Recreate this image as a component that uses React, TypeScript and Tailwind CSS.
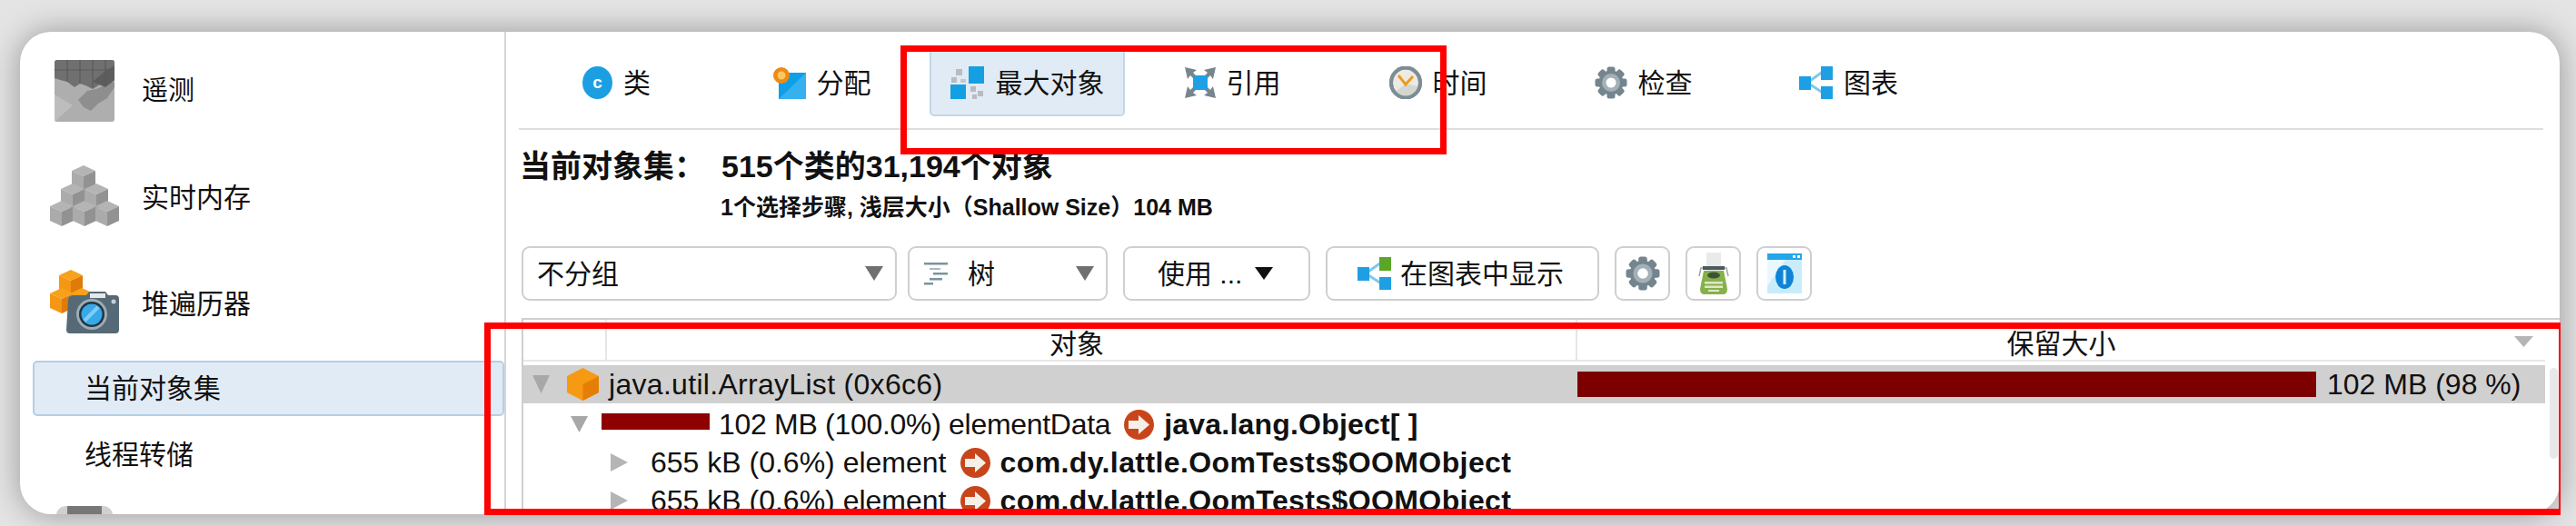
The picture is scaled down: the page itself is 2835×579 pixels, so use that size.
import React from "react";

const Tri = ({ dir, className }: { dir: "down" | "right"; className: string }) => (
  <svg viewBox="0 0 20 20" preserveAspectRatio="none" className={className}>
    <polygon points={dir === "down" ? "0,0 20,0 10,20" : "0,0 20,10 0,20"} fill="currentColor" />
  </svg>
);

const ClassIcon = () => (
  <svg viewBox="0 0 33 36" className="w-[33px] h-[36px]">
    <ellipse cx="16.5" cy="18" rx="16.5" ry="18" fill="#1b9fe2" />
    <text x="16.5" y="24" textAnchor="middle" fontSize="19" fontWeight="700" fill="#fff" fontFamily="Liberation Sans">c</text>
  </svg>
);

const AllocIcon = () => (
  <svg viewBox="0 0 36 36" className="w-[36px] h-[36px]">
    <rect x="6" y="7" width="30" height="29" fill="#0f9fe6" />
    <polygon points="36,7 36,36 6,36" fill="#34b1ee" />
    <circle cx="9" cy="10" r="9" fill="#ef8a12" />
    <circle cx="9" cy="10" r="4.5" fill="#f9c860" />
  </svg>
);

const BiggestIcon = () => (
  <svg viewBox="0 0 38 36" className="w-[38px] h-[36px]">
    <rect x="20" y="0" width="17" height="19" fill="#159fe3" />
    <rect x="0" y="20" width="17" height="16" fill="#159fe3" />
    <rect x="6" y="3" width="7" height="7" fill="#b8bcc0" />
    <rect x="1" y="12" width="6" height="6" fill="#b8bcc0" />
    <rect x="11" y="14" width="6" height="4" fill="#c4c8cc" />
    <rect x="22" y="22" width="6" height="6" fill="#b8bcc0" />
    <rect x="30" y="27" width="6" height="6" fill="#b8bcc0" />
    <rect x="24" y="31" width="5" height="5" fill="#b8bcc0" />
  </svg>
);

const RefIcon = () => (
  <svg viewBox="0 0 34 34" className="w-[34px] h-[34px]">
    <g fill="#76868e">
      <polygon points="0,0 13,3 9,6 15,12 12,15 6,9 3,13" />
      <polygon points="34,0 21,3 25,6 19,12 22,15 28,9 31,13" />
      <polygon points="0,34 13,31 9,28 15,22 12,19 6,25 3,21" />
      <polygon points="34,34 21,31 25,28 19,22 22,19 28,25 31,21" />
    </g>
    <rect x="9" y="9" width="16" height="16" fill="#1f9fe6" />
  </svg>
);

const ClockIcon = () => (
  <svg viewBox="0 0 36 36" className="w-[36px] h-[36px]">
    <ellipse cx="18" cy="18" rx="16" ry="16.5" fill="#ecebe3" stroke="#7c8d96" strokeWidth="4" />
    <path d="M4 30 L18 19 L32 22 L28 32 L12 34 Z" fill="#d4d6d2" />
    <ellipse cx="18" cy="18" rx="16" ry="16.5" fill="none" stroke="#7c8d96" strokeWidth="4" />
    <path d="M10 10 L18 20 L26 11" fill="none" stroke="#ef9a1e" strokeWidth="3" />
  </svg>
);

const GearIcon = ({ size }: { size: string }) => (
  <svg viewBox="0 0 36 36" className={size}>
    <g fill="#75858e">
      {[0, 45, 90, 135, 180, 225, 270, 315].map((a) => (
        <rect key={a} x="13.5" y="0.5" width="9" height="9" rx="2.5" transform={`rotate(${a} 18 18)`} />
      ))}
      <circle cx="18" cy="18" r="13.5" />
    </g>
    <circle cx="18" cy="18" r="10" fill="#a3b0b7" />
    <circle cx="18" cy="18" r="5.5" fill="#fff" />
  </svg>
);

const GraphIcon = ({ top }: { top: string }) => (
  <svg viewBox="0 0 37 36" className="w-[37px] h-[36px]">
    <path d="M9 18 L26 6 M9 18 L26 29" stroke="#7ec8ef" strokeWidth="3" />
    <rect x="0" y="11" width="13" height="15" fill="#1f9fe3" />
    <rect x="24" y="0" width="13" height="15" fill={top} />
    <rect x="24" y="22" width="13" height="14" fill="#1f9fe3" />
  </svg>
);

const TreeIcon = () => (
  <svg viewBox="0 0 26 26" className="w-[26px] h-[26px]">
    <g fill="#7b939f">
      <rect x="0" y="1" width="26" height="2.5" />
      <rect x="6" y="7" width="12" height="2" fill="#a9bac3" />
      <rect x="10" y="12" width="16" height="2.5" />
      <rect x="6" y="18" width="14" height="2.5" />
      <rect x="0" y="23" width="10" height="2.5" />
    </g>
  </svg>
);

const TypewriterIcon = () => (
  <svg viewBox="0 0 34 46" className="w-[34px] h-[46px]">
    <rect x="9" y="0" width="16" height="20" fill="#e9ebea" />
    <path d="M1 26 L3 17 H31 L33 26" fill="none" stroke="#9aa6aa" strokeWidth="1.5" />
    <rect x="5" y="15" width="24" height="4" fill="#4b5a60" />
    <path d="M6 20 H28 L32 40 Q32 46 27 46 H7 Q2 46 2 40 Z" fill="#86b14a" />
    <ellipse cx="17" cy="25" rx="7" ry="3.5" fill="#3f5238" />
    <g fill="#dfe8c8">
      <rect x="7" y="32" width="20" height="2.5" />
      <rect x="7" y="36.5" width="20" height="2.5" />
      <rect x="11" y="41" width="12" height="2" />
    </g>
  </svg>
);

const InfoIcon = () => (
  <svg viewBox="0 0 38 44" className="w-[38px] h-[44px]">
    <rect x="0" y="7" width="38" height="37" fill="#c9ecfb" />
    <polygon points="0,7 20,7 0,36" fill="#e8f8fe" />
    <rect x="0" y="0" width="38" height="7" fill="#25a6e8" />
    <rect x="28" y="2" width="3" height="3" fill="#fff" />
    <rect x="33" y="2" width="3" height="3" fill="#fff" />
    <ellipse cx="19" cy="26" rx="10" ry="13" fill="#0f84d6" />
    <rect x="17.5" y="18" width="3" height="16" fill="#d9f1fc" />
  </svg>
);

const Hexagon = () => (
  <svg viewBox="0 0 35 36" className="w-[35px] h-[36px]">
    <polygon points="17.5,0 35,9 35,27 17.5,36 0,27 0,9" fill="#f59a12" />
    <polygon points="17.5,18 35,9 35,27 17.5,36" fill="#e57e06" />
  </svg>
);

const ArrowIcon = () => (
  <svg viewBox="0 0 33 33" className="w-[33px] h-[33px] shrink-0">
    <circle cx="16.5" cy="16.5" r="16.5" fill="#c8451b" />
    <polygon points="5,12 16,12 16,6 28,16.5 16,27 16,21 5,21" fill="#f4efe9" />
  </svg>
);

const TelemetryIcon = () => (
  <svg viewBox="0 0 66 68" className="w-[66px] h-[68px]">
    <rect width="66" height="68" rx="3" fill="#aeaeae" />
    <path d="M0 3 Q0 0 3 0 H63 Q66 0 66 3 V22 L58 30 L50 27 L42 32 L34 28 L28 26 L22 30 L14 24 L6 22 L0 20 Z" fill="#707070" />
    <path d="M26 44 L36 34 L46 32 L60 26 L66 24 V30 L58 42 L48 48 L40 56 L32 52 Z" fill="#8e8e8e" />
    <path d="M0 68 L20 50 L0 38 Z" fill="#bdbdbd" />
    <path d="M42 24 L56 12 L66 6 V22 L56 30 Z" fill="#5d5d5d" />
    <path d="M0 11 H66 M14 0 V24 M28 0 V26 M42 0 V30 M56 0 V28" stroke="#5a5a5a" strokeWidth="1.2" />
  </svg>
);

const Cube = ({ x, y, light, mid, dark }: { x: number; y: number; light: string; mid: string; dark: string }) => (
  <g transform={`translate(${x} ${y})`}>
    <polygon points="13,0 26,6 13,12 0,6" fill={light} />
    <polygon points="0,6 13,12 13,28 0,22" fill={mid} />
    <polygon points="13,12 26,6 26,22 13,28" fill={dark} />
  </g>
);

const CubesIcon = () => {
  const c = { light: "#b4b4b4", mid: "#ababab", dark: "#929292" };
  return (
    <svg viewBox="0 0 76 67" className="w-[76px] h-[67px]">
      <Cube x={24} y={0} {...c} />
      <Cube x={12} y={20} {...c} />
      <Cube x={38} y={20} {...c} />
      <Cube x={0} y={39} {...c} />
      <Cube x={25} y={39} {...c} />
      <Cube x={50} y={39} {...c} />
    </svg>
  );
};

const HeapWalkerIcon = () => {
  const c = { light: "#f7a11c", mid: "#f59614", dark: "#e07a08" };
  return (
    <svg viewBox="0 0 76 70" className="w-[76px] h-[70px]">
      <Cube x={10} y={0} {...c} />
      <Cube x={0} y={20} {...c} />
      <Cube x={22} y={20} {...c} />
      <path d="M20 34 Q20 28 26 28 H40 L43 24 H61 L64 28 H72 Q76 28 76 32 V66 Q76 70 72 70 H22 Q18 70 18 66 Z" fill="#556a76" />
      <rect x="44" y="26" width="17" height="5" fill="#e6e9ea" />
      <circle cx="46" cy="49" r="17" fill="#9eadb5" />
      <circle cx="46" cy="49" r="14" fill="#24343e" />
      <circle cx="46" cy="49" r="11.5" fill="#35a9ea" />
      <path d="M38 56 L53 41" stroke="#7fcdf4" strokeWidth="4" />
      <circle cx="70" cy="35" r="2.5" fill="#c5d0d5" />
    </svg>
  );
};

const tabs = [
  { label: "类", icon: <ClassIcon /> },
  { label: "分配", icon: <AllocIcon /> },
  { label: "最大对象", icon: <BiggestIcon />, active: true },
  { label: "引用", icon: <RefIcon /> },
  { label: "时间", icon: <ClockIcon /> },
  { label: "检查", icon: <GearIcon size="w-[36px] h-[36px]" /> },
  { label: "图表", icon: <GraphIcon top="#1f9fe3" /> },
];

const btn = "flex items-center h-[60px] bg-white border-2 border-[#cfcfcf] rounded-[9px]";

const ChildRow = () => (
  <div className="flex items-center h-[42px] pl-[96px] text-[32px] whitespace-nowrap">
    <Tri dir="right" className="w-[19px] h-[20px] text-[#b5b5b5] mr-[25px] shrink-0" />
    <span>655 kB (0.6%) element</span>
    <span className="ml-[15px]"><ArrowIcon /></span>
    <span className="ml-[11px] font-bold tracking-[0.4px]">com.dy.lattle.OomTests$OOMObject</span>
  </div>
);

export default function App() {
  return (
    <div className="relative w-[2835px] h-[579px] overflow-hidden bg-[#e4e4e4] pt-[35px] pl-[22px] text-[#111] font-['Liberation_Sans','Noto_Sans_CJK_SC',sans-serif]">
      <div className="flex w-[2795px] h-[531px] bg-white rounded-[34px] overflow-hidden shadow-[0_0_34px_rgba(0,0,0,0.34)]">
        {/* left nav */}
        <aside className="w-[535px] shrink-0 border-r-2 border-[#d6d6d6] overflow-hidden">
          <div className="flex items-center h-[68px] mt-[31px] pl-[38px] gap-[30px] text-[29px]">
            <TelemetryIcon />
            <span className="mt-[2px]">遥测</span>
          </div>
          <div className="flex items-center h-[67px] mt-[48px] pl-[33px] gap-[25px] text-[30px]">
            <CubesIcon />
            <span className="mt-[3px]">实时内存</span>
          </div>
          <div className="flex items-center h-[70px] mt-[48px] pl-[33px] gap-[25px] text-[30px]">
            <HeapWalkerIcon />
            <span className="mt-[4px]">堆遍历器</span>
          </div>
          <div className="flex items-center h-[61px] mt-[30px] ml-[14px] pl-[55px] bg-[#e1ebf5] border-2 border-[#b5cfe5] rounded-[5px] text-[30px]">
            当前对象集
          </div>
          <div className="flex items-center h-[40px] mt-[22px] pl-[71px] text-[30px]">线程转储</div>
          <div className="relative mt-[37px] ml-[40px] w-[62px] h-[14px] bg-[#d0d0d0] rounded-t-[10px]">
            <div className="absolute left-[12px] top-0 w-[38px] h-[14px] bg-[#777]" />
          </div>
        </aside>

        <main className="flex-1 min-w-0 pl-[14px]">
          {/* tabs */}
          <div className="flex gap-[11px] h-[108px] pt-[19px] mr-[18px] border-b-2 border-[#dedede]">
            {tabs.map((t) => (
              <div
                key={t.label}
                className={`flex items-center justify-center gap-[12px] w-[215px] h-[74px] rounded-[5px] text-[30px] ${
                  t.active ? "bg-[#e1ebf5] border-2 border-[#c3d6e6]" : ""
                }`}
              >
                {t.icon}
                <span>{t.label}</span>
              </div>
            ))}
          </div>

          {/* current object set */}
          <div className="pl-[1px] h-[128px]">
            <div className="flex items-center pt-[20px] h-[60px] font-bold text-[34px]">
              <span className="w-[222px]">当前对象集：</span>
              <span>515个类的31,194个对象</span>
            </div>
            <div className="pl-[221px] pt-[7px] font-bold text-[25px]">1个选择步骤, 浅层大小（Shallow Size）104 MB</div>
          </div>

          {/* toolbar */}
          <div className="flex pl-[3px] text-[30px]">
            <div className={`${btn} w-[413px] justify-between pl-[15px] pr-[13px]`}>
              <span>不分组</span>
              <Tri dir="down" className="w-[20px] h-[16px] text-[#707070]" />
            </div>
            <div className={`${btn} w-[220px] ml-[12px] pl-[16px] pr-[13px]`}>
              <TreeIcon />
              <span className="ml-[22px]">树</span>
              <Tri dir="down" className="ml-auto w-[20px] h-[16px] text-[#707070]" />
            </div>
            <div className={`${btn} w-[206px] ml-[17px] pl-[36px]`}>
              <span>使用 ...</span>
              <Tri dir="down" className="ml-[14px] w-[20px] h-[14px] text-[#111]" />
            </div>
            <div className={`${btn} w-[301px] ml-[17px] pl-[33px] gap-[10px]`}>
              <GraphIcon top="#5aa626" />
              <span>在图表中显示</span>
            </div>
            <div className={`${btn} w-[61px] ml-[17px] justify-center`}>
              <GearIcon size="w-[38px] h-[40px]" />
            </div>
            <div className={`${btn} w-[61px] ml-[17px] justify-center`}>
              <TypewriterIcon />
            </div>
            <div className={`${btn} w-[61px] ml-[17px] justify-center`}>
              <InfoIcon />
            </div>
          </div>

          {/* table */}
          <div className="flex ml-[3px] mt-[19px] h-[220px] border-t-2 border-l-2 border-[#cfcfcf]">
            <div className="w-[2225px] shrink-0">
              <div className="flex h-[46px] text-[30px] border-b-2 border-[#e8e8e8]">
                <div className="w-[92px] border-r-2 border-[#e6e6e6]" />
                <div className="w-[1068px] border-r-2 border-[#e6e6e6] flex items-center justify-center pr-[32px] pt-[8px]">对象</div>
                <div className="relative flex-1 flex items-center justify-center pt-[8px]">
                  保留大小
                  <Tri dir="down" className="absolute right-[13px] top-[18px] w-[21px] h-[12px] text-[#b5b5b5]" />
                </div>
              </div>
              <div className="flex items-center h-[42px] mt-[4px] bg-[#d0d0d0] text-[32px] whitespace-nowrap">
                <div className="flex items-center w-[1160px] shrink-0 pl-[10px] tracking-[0.3px]">
                  <Tri dir="down" className="w-[19px] h-[20px] text-[#a8a8a8]" />
                  <span className="ml-[19px]"><Hexagon /></span>
                  <span className="ml-[11px]">java.util.ArrayList (0x6c6)</span>
                </div>
                <div className="w-[813px] h-[28px] bg-[#7c0000]" />
                <span className="ml-[12px]">102 MB (98 %)</span>
              </div>
              <div className="flex items-center h-[42px] mt-[2px] pl-[52px] text-[32px] whitespace-nowrap">
                <Tri dir="down" className="w-[19px] h-[18px] text-[#a8a8a8] mr-[15px] shrink-0" />
                <div className="w-[119px] h-[18px] bg-[#8f0000] -mt-[6px]" />
                <span className="ml-[10px] tracking-[-0.3px]">102 MB (100.0%) elementData</span>
                <span className="ml-[15px]"><ArrowIcon /></span>
                <span className="ml-[11px] font-bold tracking-[0.2px]">java.lang.Object[ ]</span>
              </div>
              <ChildRow />
              <ChildRow />
            </div>
            <div className="w-[9px] h-[100px] mt-[53px] ml-[5px] bg-[#e8e8e8] rounded-[5px]" />
          </div>
        </main>
      </div>

      {/* red annotation boxes */}
      <div className="absolute left-[991px] top-[50px] w-[601px] h-[120px] border-[7px] border-[#fe0000]" />
      <div className="absolute left-[533px] top-[355px] w-[2285px] h-[212px] border-y-[7px] border-l-[7px] border-r-[2px] border-[#fe0000]" />
    </div>
  );
}
